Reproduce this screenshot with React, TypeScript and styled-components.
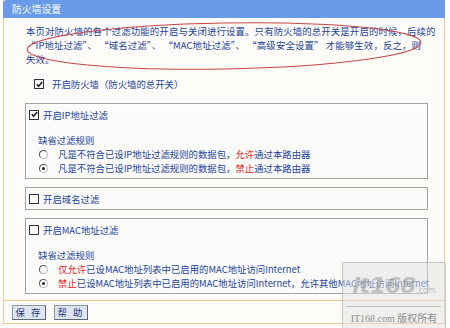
import styled, { createGlobalStyle } from "styled-components";

const GlobalStyle = createGlobalStyle`
  html, body { margin: 0; padding: 0; background: #ffffff; }
  body { font-family: "Noto Sans CJK SC", "DejaVu Sans", sans-serif; }
`;

const BLUE_TEXT = "#23449a";
const ORANGE = "#f3c98f";

export default function App() {
  return (
    <>
      <GlobalStyle />
      <PageStl>
        <FrameStl>
          <TitleBarStl>防火墙设置</TitleBarStl>
          <BodyStl>
            <IntroStl>
              本页对防火墙的各个过滤功能的开启与关闭进行设置。只有防火墙的总开关是开启的时候，后续的
              <br />
              “IP地址过滤”、 “域名过滤”、 “MAC地址过滤”、 “高级安全设置” 才能够生效，反之，则
              <br />
              失效。
            </IntroStl>
            <MasterRowStl>
              <Check on />
              <span>开启防火墙（防火墙的总开关）</span>
            </MasterRowStl>

            <GroupStl $gap={12}>
              <GroupHeadStl>
                <Check on />
                <span>开启IP地址过滤</span>
              </GroupHeadStl>
              <RuleTitleStl>缺省过滤规则</RuleTitleStl>
              <RadioRowStl>
                <Radio />
                <span>
                  凡是不符合已设IP地址过滤规则的数据包，<RedStl>允许</RedStl>通过本路由器
                </span>
              </RadioRowStl>
              <RadioRowStl>
                <Radio on />
                <span>
                  凡是不符合已设IP地址过滤规则的数据包，<RedStl>禁止</RedStl>通过本路由器
                </span>
              </RadioRowStl>
            </GroupStl>

            <GroupStl>
              <GroupHeadStl>
                <Check />
                <span>开启域名过滤</span>
              </GroupHeadStl>
            </GroupStl>

            <GroupStl>
              <GroupHeadStl>
                <Check />
                <span>开启MAC地址过滤</span>
              </GroupHeadStl>
              <RuleTitleStl>缺省过滤规则</RuleTitleStl>
              <RadioRowStl>
                <Radio />
                <span>
                  <RedStl>仅允许</RedStl>已设MAC地址列表中已启用的MAC地址访问Internet
                </span>
              </RadioRowStl>
              <RadioRowStl>
                <Radio on />
                <span>
                  <RedStl>禁止</RedStl>已设MAC地址列表中已启用的MAC地址访问Internet，允许其他MAC地址访问Internet
                </span>
              </RadioRowStl>
            </GroupStl>
          </BodyStl>
          <FooterStl>
            <ButtonStl>保 存</ButtonStl>
            <ButtonStl>帮 助</ButtonStl>
          </FooterStl>
        </FrameStl>

        <EllipseStl width="450" height="90" viewBox="0 0 450 90">
          <ellipse
            cx="224"
            cy="46"
            rx="197"
            ry="23"
            fill="none"
            stroke="#c8464a"
            strokeWidth="1"
            transform="rotate(-1 224 46)"
          />
        </EllipseStl>

        <WatermarkStl>
          <WatermarkLogoStl>
            it168<small>.com</small>
          </WatermarkLogoStl>
          <WatermarkTextStl>IT168.com 版权所有</WatermarkTextStl>
        </WatermarkStl>
      </PageStl>
    </>
  );
}

function Check({ on }: { on?: boolean }) {
  return (
    <CheckStl>
      {on && (
        <svg width="7" height="7" viewBox="0 0 7 7">
          <path d="M0.8 3.2 L2.6 5.2 L6.2 0.9" fill="none" stroke="#222" strokeWidth="1.6" />
        </svg>
      )}
    </CheckStl>
  );
}

function Radio({ on }: { on?: boolean }) {
  return <RadioStl $on={on} />;
}

const PageStl = styled.div`
  position: relative;
  width: 450px;
  height: 328px;
  overflow: hidden;
  background: #ffffff;
`;

const FrameStl = styled.div`
  margin-left: 3px;
  width: 440px;
  height: 323px;
  border-left: 1px solid ${ORANGE};
  border-right: 1px solid ${ORANGE};
  border-bottom: 1px solid ${ORANGE};
  background: #fdfcf9;
  display: flex;
  flex-direction: column;
`;

const TitleBarStl = styled.div`
  height: 18px;
  margin: 0 -1px;
  padding-left: 9px;
  background: #6a9be8;
  border-top-left-radius: 4px;
  color: #ffffff;
  font-size: 9.8px;
  line-height: 18px;
`;

const BodyStl = styled.div`
  flex: 1;
  display: flex;
  flex-direction: column;
  padding: 6px 0 0 21px;
  color: ${BLUE_TEXT};
  font-size: 9.4px;
`;

const IntroStl = styled.div`
  white-space: nowrap;
  line-height: 14px;
  margin-left: 1px;
  letter-spacing: 0.15px;
`;

const MasterRowStl = styled.div`
  display: flex;
  align-items: center;
  gap: 8px;
  height: 14px;
  margin: 11px 0 0 9px;
`;

const GroupStl = styled.div<{ $gap?: number }>`
  width: 398px;
  margin-top: ${(p) => p.$gap ?? 8}px;
  padding: 3px 0 3px 3px;
  border: 1px solid #a3a3a3;
  box-shadow: inset 1px 1px 0 #ffffff, 1px 1px 0 #ffffff;
  background: #fbfbfa;
  display: flex;
  flex-direction: column;
`;

const GroupHeadStl = styled.div`
  display: flex;
  align-items: center;
  gap: 4px;
  height: 15px;
`;

const RuleTitleStl = styled.div`
  margin: 11px 0 0 9px;
  height: 14px;
  line-height: 14px;
`;

const RadioRowStl = styled.div`
  display: flex;
  align-items: center;
  gap: 10px;
  height: 14px;
  padding-left: 10px;
  white-space: nowrap;
`;

const RedStl = styled.span`
  color: #e3262b;
`;

const CheckStl = styled.span`
  width: 8px;
  height: 8px;
  border: 1px solid #333;
  background: #ffffff;
  display: inline-flex;
  align-items: center;
  justify-content: center;
  flex: none;
`;

const RadioStl = styled.span<{ $on?: boolean }>`
  position: relative;
  width: 7px;
  height: 7px;
  border-radius: 50%;
  border: 1px solid #b9b9b9;
  border-top-color: #555;
  border-left-color: #555;
  background: #ffffff;
  flex: none;
  &::after {
    content: "";
    display: ${(p) => (p.$on ? "block" : "none")};
    position: absolute;
    left: 2px;
    top: 2px;
    width: 3px;
    height: 3px;
    border-radius: 50%;
    background: #222;
  }
`;

const FooterStl = styled.div`
  display: flex;
  gap: 8px;
  align-items: center;
  height: 22px;
  padding-left: 8px;
  border-top: 1px solid ${ORANGE};
  margin-top: auto;
`;

const ButtonStl = styled.button`
  width: 34px;
  height: 15px;
  padding: 0;
  border: 1px solid #8a94a8;
  border-right-color: #5d6678;
  border-bottom-color: #5d6678;
  background: #dfe5ef;
  color: #1d3580;
  font-family: "Noto Sans CJK SC", sans-serif;
  font-size: 9.4px;
  line-height: 13px;
  letter-spacing: 2px;
`;

const EllipseStl = styled.svg`
  position: absolute;
  left: 0;
  top: 0;
  pointer-events: none;
`;

const WatermarkStl = styled.div`
  position: absolute;
  left: 342px;
  top: 262px;
  width: 102px;
  height: 66px;
  background: rgba(225, 225, 225, 0.5);
  border: 1px solid rgba(150, 150, 150, 0.45);
  display: flex;
  flex-direction: column;
  align-items: center;
`;

const WatermarkLogoStl = styled.div`
  margin-top: 10px;
  height: 26px;
  font-family: "DejaVu Sans", sans-serif;
  font-weight: bold;
  font-style: italic;
  font-size: 22px;
  line-height: 26px;
  color: rgba(150, 150, 150, 0.55);
  small {
    font-size: 8px;
    font-style: normal;
    font-weight: normal;
  }
`;

const WatermarkTextStl = styled.div`
  margin-top: 7px;
  padding-top: 3px;
  width: 94px;
  border-top: 1px solid rgba(140, 140, 140, 0.5);
  text-align: center;
  font-family: "Liberation Serif", "Noto Sans CJK SC", serif;
  font-size: 10px;
  color: rgba(120, 120, 120, 0.85);
`;
